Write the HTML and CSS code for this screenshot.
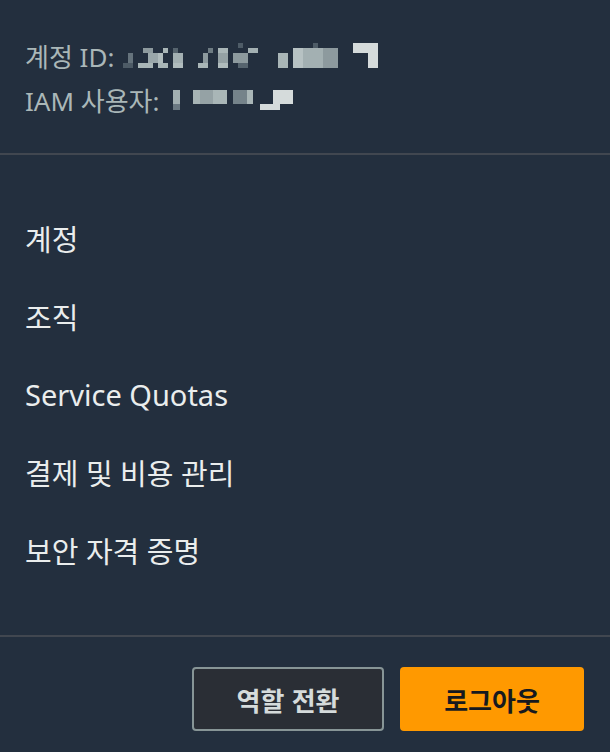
FILE: index.html
```html
<!DOCTYPE html>
<html lang="ko">
<head>
    <meta charset="UTF-8">
    <meta name="viewport" content="width=device-width, initial-scale=1.0">
    <title>계정 메뉴</title>
    <link rel="stylesheet" href="styles.css">
</head>
<body>
    <div class="account-menu">
        <!-- 계정 정보 (가려진 값) -->
        <div class="account-info">
            <div class="info-line">
                <span>계정 ID:</span>
                <svg class="masked masked-id" width="262" height="30" viewBox="0 0 262 30">
                    <rect x="5" y="22" width="10" height="5" fill="#4d5b66"/>
                    <rect x="10" y="12" width="5" height="10" fill="#65737c"/>
                    <rect x="20" y="22" width="15" height="5" fill="#a9b6b7"/>
                    <rect x="30" y="12" width="10" height="10" fill="#9aa7aa"/>
                    <rect x="25" y="7" width="10" height="5" fill="#8d9a9e"/>
                    <rect x="45" y="7" width="5" height="5" fill="#a9b6b7"/>
                    <rect x="40" y="12" width="5" height="10" fill="#b0bcbd"/>
                    <rect x="40" y="22" width="10" height="5" fill="#a9b6b7"/>
                    <rect x="55" y="7" width="5" height="5" fill="#56646e"/>
                    <rect x="55" y="12" width="10" height="10" fill="#a3b0b2"/>
                    <rect x="55" y="22" width="10" height="5" fill="#b0bcbd"/>
                    <rect x="80" y="22" width="10" height="5" fill="#a9b6b7"/>
                    <rect x="85" y="12" width="5" height="10" fill="#8d9a9e"/>
                    <rect x="90" y="7" width="5" height="5" fill="#6d7b82"/>
                    <rect x="100" y="7" width="10" height="5" fill="#a9b6b7"/>
                    <rect x="100" y="12" width="10" height="10" fill="#94a1a4"/>
                    <rect x="100" y="22" width="10" height="5" fill="#b0bcbd"/>
                    <rect x="120" y="2" width="5" height="5" fill="#4e5c67"/>
                    <rect x="115" y="12" width="15" height="10" fill="#8d9a9e"/>
                    <rect x="120" y="22" width="10" height="5" fill="#56646e"/>
                    <rect x="130" y="7" width="10" height="5" fill="#a3b0b2"/>
                    <rect x="160" y="12" width="10" height="15" fill="#a9b6b7"/>
                    <rect x="175" y="7" width="10" height="20" fill="#b7c2c3"/>
                    <rect x="185" y="7" width="20" height="20" fill="#a3b0b2"/>
                    <rect x="195" y="2" width="5" height="5" fill="#4e5c67"/>
                    <rect x="205" y="7" width="15" height="20" fill="#8d9a9e"/>
                    <rect x="235" y="2" width="25" height="10" fill="#d5dbdb"/>
                    <rect x="250" y="12" width="10" height="15" fill="#d5dbdb"/>
                </svg>
            </div>
            <div class="info-line">
                <span>IAM 사용자:</span>
                <svg class="masked" width="134" height="26" viewBox="0 0 134 26">
                    <rect x="13" y="3" width="7" height="14" fill="#a2afb1"/>
                    <rect x="13" y="17" width="7" height="6" fill="#6b7982"/>
                    <rect x="33" y="3" width="7" height="14" fill="#a7b4b5"/>
                    <rect x="40" y="3" width="13" height="14" fill="#95a2a5"/>
                    <rect x="53" y="3" width="14" height="14" fill="#a9b6b7"/>
                    <rect x="73" y="3" width="14" height="14" fill="#75838a"/>
                    <rect x="87" y="3" width="6" height="14" fill="#a9b6b7"/>
                    <rect x="100" y="17" width="20" height="6" fill="#d5dbdb"/>
                    <rect x="113" y="3" width="20" height="14" fill="#d5dbdb"/>
                </svg>
            </div>
        </div>

        <!-- 메뉴 링크 -->
        <ul class="menu-list">
            <li><a href="#">계정</a></li>
            <li><a href="#">조직</a></li>
            <li><a href="#">Service Quotas</a></li>
            <li><a href="#">결제 및 비용 관리</a></li>
            <li><a href="#">보안 자격 증명</a></li>
        </ul>

        <div class="menu-footer">
            <button class="btn btn-secondary">역할 전환</button>
            <button class="btn btn-primary">로그아웃</button>
        </div>
    </div>
</body>
</html>
```

FILE: styles.css
```css
/* 계정 드롭다운 메뉴 */
body {
    margin: 0;
    padding: 0;
    background-color: #232f3e;
    font-family: "Noto Sans", "Noto Sans CJK KR", sans-serif;
}
.account-menu {
    width: 610px;
    height: 752px;
    background-color: #232f3e;
}
.account-info {
    padding: 34px 25px 31px;
    border-bottom: 2px solid #414750;
    color: #aab7b8;
    font-size: 26px;
}
.info-line {
    display: flex;
    align-items: center;
    height: 44px;
}
.masked {
    display: block;
}
.masked-id {
    margin-left: 4px;
}
.menu-list {
    list-style: none;
    margin: 0;
    padding: 44px 0 46px;
    border-bottom: 2px solid #414750;
}
.menu-list li {
    height: 78px;
    display: flex;
    align-items: center;
}
.menu-list a {
    padding: 0 25px;
    color: #eaeded;
    font-size: 29px;
    text-decoration: none;
}
.menu-footer {
    display: flex;
    justify-content: flex-end;
    gap: 16px;
    padding: 30px 26px 0;
}
.btn {
    height: 64px;
    border-radius: 4px;
    font-family: "Noto Sans CJK KR", "Noto Sans", sans-serif;
    font-size: 26px;
    font-weight: bold;
    cursor: pointer;
}
.btn-secondary {
    width: 192px;
    background-color: #2a2e35;
    border: 2px solid #879596;
    color: #d5dbdb;
}
.btn-primary {
    width: 184px;
    background-color: #ff9900;
    border: none;
    color: #16191f;
}
```
